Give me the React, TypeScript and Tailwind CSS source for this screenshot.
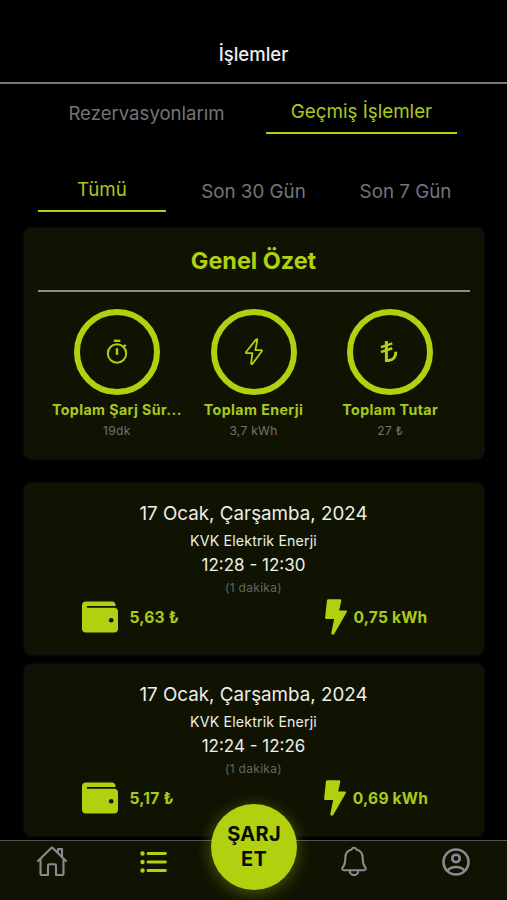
import type { ReactNode } from "react";

const cardClass =
  "mx-auto w-[458px] rounded-[7px] bg-[#111302] shadow-[0_0_3px_1px_#1a1b1a]";

function TimerIcon() {
  return (
    <svg width="24" height="28" viewBox="0 0 24 28" fill="none" stroke="#b1d010" strokeWidth="2">
      <path d="M8.8 2.8H15.4" strokeWidth="2.3" />
      <circle cx="12" cy="15.5" r="9.2" />
      <path d="M12 10.2V16.8" strokeWidth="2.4" />
      <path d="M18.3 9.2L20.6 6.9" strokeWidth="2.3" />
    </svg>
  );
}

function BoltOutlineIcon() {
  return (
    <svg width="24" height="28" viewBox="0 0 24 28" fill="none" stroke="#b1d010" strokeWidth="1.8" strokeLinejoin="round">
      <path d="M14.1 1.4L4.1 14Q3.4 15 4.6 15.1H10.4L9.1 25.3Q9.4 26.8 10.5 25.8L19.8 13.3Q20.4 12.3 19.3 12.2H13.4L15.3 2Q15.1 .5 14.1 1.4Z" />
    </svg>
  );
}

function LiraIcon() {
  return (
    <svg width="24" height="28" viewBox="0 0 24 28" fill="none" stroke="#b1d010" strokeWidth="3">
      <path d="M8.4 3V22.4H10.5C14.8 22.4 17.8 19.2 17.8 13.7" />
      <path d="M2.9 9.2L14.3 5.4M2.9 14L14.3 10.2" strokeWidth="2.5" />
    </svg>
  );
}

function WalletIcon() {
  return (
    <svg width="36" height="32" viewBox="0 0 36 32">
      <path fill="#b1d010" d="M4 .5H30Q33.5.5 33.7 5H5.5Q4.8 5 4.8 5.8T5.5 6.7H32Q36 6.7 36 10.5V27.5Q36 31.5 32 31.5H4Q0 31.5 0 27.5V4.5Q0 .5 4 .5Z" />
      <circle cx="29.2" cy="19.2" r="2.3" fill="#111302" />
    </svg>
  );
}

function BoltIcon() {
  return (
    <svg width="22" height="36" viewBox="0 0 22 36" fill="#b1d010">
      <path d="M3.5.3H15Q16.6.3 16.3 1.8L14.2 11.4H21Q22.5 11.5 21.8 13L9.5 34.5Q8.7 36 7.3 35.6Q6.1 35.2 6.4 33.8L9.1 20H1.3Q0 20 .1 18.7L1.9 1.7Q2.1.3 3.5.3Z" />
    </svg>
  );
}

function Metric({ icon, label, value }: { icon: ReactNode; label: string; value: string }) {
  return (
    <div className="flex w-[136.7px] flex-col items-center">
      <div className="flex size-[86px] items-center justify-center rounded-full border-[6px] border-[#b1d010]">
        {icon}
      </div>
      <div className="mt-[5px] text-[14.2px] leading-5 font-bold tracking-[0.42px] whitespace-nowrap text-[#a9c91b]">{label}</div>
      <div className="mt-[3px] text-[12px] leading-4 tracking-[0.3px] text-[#71736c]">{value}</div>
    </div>
  );
}

function Transaction({ time, price, energy }: { time: string; price: string; energy: string }) {
  return (
    <section className={`${cardClass} h-[170px] pt-[18px] text-center text-[#edeee8]`}>
      <h2 className="text-[18.8px] leading-6">17 Ocak, Çarşamba, 2024</h2>
      <p className="mt-[5px] text-[14.2px] leading-5 tracking-[0.16px]">KVK Elektrik Enerji</p>
      <p className="mt-[2px] text-[17px] leading-6">{time}</p>
      <p className="mt-[3px] text-[12px] leading-4 tracking-[0.3px] text-[#64665f]">(1 dakika)</p>
      <div className="mt-[3px] grid grid-cols-2 text-[15.6px] font-bold tracking-[0.2px] text-[#a9c91b]">
        <div className="flex h-9 items-center justify-start gap-[12px] pl-[57px]">
          <WalletIcon />
          <span className="pt-[2px] whitespace-nowrap">{price}</span>
        </div>
        <div className="flex h-9 items-center justify-center gap-[7px] pl-[16px]">
          <BoltIcon />
          <span className="pt-[2px] whitespace-nowrap">{energy}</span>
        </div>
      </div>
    </section>
  );
}

export default function App() {
  return (
    <div className="relative flex h-[900px] w-[507px] flex-col overflow-hidden bg-black font-['Inter','Liberation_Sans',sans-serif]">
      <header className="flex h-[84px] shrink-0 items-end justify-center border-b-2 border-[#777] pb-[16px]">
        <h1 className="text-[18.5px] leading-6 font-medium text-[#eee]">İşlemler</h1>
      </header>

      <nav className="flex h-[50px] shrink-0 pl-[51px] text-[18.8px] leading-6">
        <button className="flex h-full w-[191px] items-start justify-center pt-[17px] text-[18.6px] text-[#71757a]">Rezervasyonlarım</button>
        <button className="ml-[24px] flex h-full w-[191px] items-start justify-center border-b-[2.5px] border-[#b1d010] pt-[16px] text-[#a9c91b]">Geçmiş İşlemler</button>
      </nav>

      <nav className="mt-[38px] flex h-[40px] shrink-0 gap-[24px] pl-[38px] text-[18.8px] leading-6">
        <button className="flex w-[128px] items-start justify-center border-b-[2.5px] border-[#b1d010] pt-[6px] text-[#a9c91b]">Tümü</button>
        <button className="flex w-[128px] items-start justify-center pt-[8px] pr-[1px] text-[#71757a]">Son 30 Gün</button>
        <button className="flex w-[128px] items-start justify-center pt-[8px] pr-[1px] text-[#71757a]">Son 7 Gün</button>
      </nav>

      <main className="flex flex-col pt-[17px]">
        <section className={`${cardClass} h-[229px] px-[13px] pt-[16px]`}>
          <h2 className="text-center text-[23.4px] leading-8 font-bold text-[#b1d010]">Genel Özet</h2>
          <div className="mt-[13px] h-[2px] bg-[#8c8e82]" />
          <div className="mt-[17px] -ml-[3px] flex w-[440px] justify-start pl-[14px]">
            <Metric icon={<TimerIcon />} label="Toplam Şarj Sür..." value="19dk" />
            <Metric icon={<BoltOutlineIcon />} label="Toplam Enerji" value="3,7 kWh" />
            <Metric icon={<LiraIcon />} label="Toplam Tutar" value="27 ₺" />
          </div>
        </section>
        <div className="mt-[26px] flex flex-col gap-[11px]">
          <Transaction time="12:28 - 12:30" price="5,63 ₺" energy="0,75 kWh" />
          <Transaction time="12:24 - 12:26" price="5,17 ₺" energy="0,69 kWh" />
        </div>
      </main>

      <footer className="absolute bottom-0 left-0 flex h-[60px] w-full border-t border-[#50524b] bg-[#111302]">
        <button className="flex w-[103px] justify-center pt-[5px]" aria-label="home">
          <svg width="32" height="31" viewBox="0 0 32 31" fill="none" stroke="#8a8a91" strokeWidth="2.1" strokeLinecap="round" strokeLinejoin="round">
            <path d="M2 15L15 2.2Q16 1.2 17 2.2L30 15M22 7V3H26V11M4.5 12.8V27.5Q4.5 29 6 29H12V19.5Q12 18.3 13.2 18.3H18.8Q20 18.3 20 19.5V29H26Q27.5 29 27.5 27.5V12.8" />
          </svg>
        </button>
        <button className="flex w-[101px] justify-center pt-[10px]" aria-label="transactions">
          <svg width="28" height="22" viewBox="0 0 28 22" fill="none" stroke="#b1d010" strokeWidth="2.8" strokeLinecap="round">
            <path d="M8 2.5H25.5M8 11H25.5M8 19.5H25.5" />
            <path d="M2.5 2.5H2.51M2.5 11H2.51M2.5 19.5H2.51" strokeWidth="4.4" />
          </svg>
        </button>
        <div className="w-[98px]" />
        <button className="flex w-[103px] justify-center pt-[5px]" aria-label="notifications">
          <svg width="28" height="31" viewBox="0 0 28 31" fill="none" stroke="#8a8a91" strokeWidth="2.1" strokeLinecap="round" strokeLinejoin="round">
            <path d="M14 1.7C12.6 1.7 12 2.4 11.6 3.5C7.5 4.6 5.3 8 5.3 12C5.3 18.5 4.3 19.3 2.6 21.5C1.7 22.9 2.4 24.2 4 24.2H24C25.6 24.2 26.3 22.9 25.4 21.5C23.7 19.3 22.7 18.5 22.7 12C22.7 8 20.5 4.6 16.4 3.5C16 2.4 15.4 1.7 14 1.7ZM9.7 24.5C9.7 27.2 11.5 29.1 14 29.1S18.3 27.2 18.3 24.5" />
          </svg>
        </button>
        <button className="flex w-[102px] justify-center pt-[6px]" aria-label="profile">
          <svg width="30" height="30" viewBox="0 0 30 30" fill="none" stroke="#8a8a91" strokeWidth="2.6">
            <circle cx="15" cy="15" r="12.5" />
            <circle cx="15" cy="11.4" r="3.7" />
            <path d="M6.5 23.5C10.5 18.8 19.5 18.8 23.5 23.5" />
          </svg>
        </button>
      </footer>
      <button className="absolute top-[804px] left-[211px] flex size-[86px] items-center justify-center rounded-full bg-[#b1d010] text-center text-[20px] leading-[25px] font-bold tracking-[0.3px] text-[#0b0d02] shadow-[0_3px_14px_2px_rgba(177,208,16,0.3)]">
        ŞARJ<br />ET
      </button>
    </div>
  );
}
